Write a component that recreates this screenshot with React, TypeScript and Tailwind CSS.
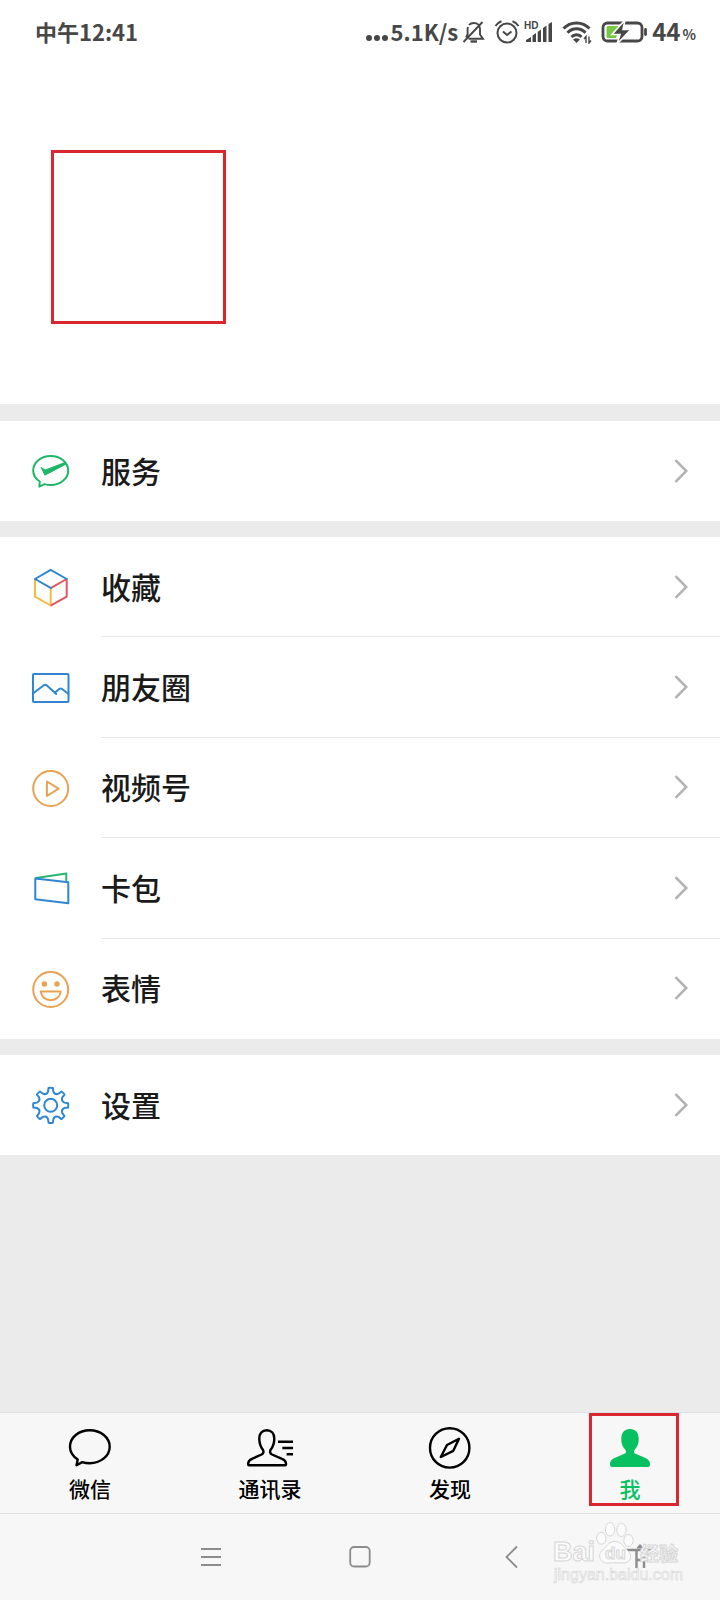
import type { ReactNode } from 'react';

const GREEN = '#1db767';
const BLUE = '#2f86d3';
const ORANGE = '#e8a252';

// Eight teeth around the centre (19.7, 20.3)
const gearPath = (() => {
  const at = (deg: number, r: number) => {
    const a = (deg * Math.PI) / 180;
    return `${(19.7 + r * Math.sin(a)).toFixed(2)} ${(20.3 - r * Math.cos(a)).toFixed(2)}`;
  };
  let d = '';
  for (let i = 0; i < 8; i++) {
    const c = i * 45;
    d += `${i === 0 ? 'M' : 'L'}${at(c - 7, 17.5)}`;
    d += `Q${at(c, 17.8)} ${at(c + 7, 17.5)}`;
    d += `L${at(c + 11, 14)}`;
    d += `Q${at(c + 22.5, 11)} ${at(c + 34, 14)}`;
  }
  return d + 'Z';
})();

interface IconProps {
  children: ReactNode;
  color?: string;
}

const RowIcon = ({ children, color }: IconProps) => (
  <svg
    viewBox="0 0 40 40"
    className="w-10 h-10 shrink-0"
    fill="none"
    stroke={color}
    strokeWidth="2"
    strokeLinejoin="round"
    strokeLinecap="round"
    aria-hidden="true"
  >
    {children}
  </svg>
);

const ServiceIcon = () => (
  <RowIcon color={GREEN}>
    <path d="M8.8 30.5C4.6 27.8 2.2 24 2.2 19.5C2.2 11.4 10 5 19.700 5S37.2 11.4 37.2 19.5S29.4 34 19.7 34C17.5 34 15.4 33.7 13.5 33.1L8.3 35.6Z" />
    <path d="M10 16L14.2 18.600L34 11L36 13L13.9 24.500Z" fill={GREEN} stroke="none" />
    <path d="M10.2 16.400L13.9 24L35.500 12.600" strokeWidth="1" />
  </RowIcon>
);

const FavoritesIcon = () => (
  <RowIcon>
    <path d="M4 12.5V29.7L19.7 38.5V21" stroke="#f3bd45" />
    <path d="M35.7 12V29.7L20.5 38.2M35.7 12L20.5 20.7" stroke="#df5661" />
    <path d="M4 12L19.7 2.800L35.7 12M4 12L19.7 20.900" stroke={BLUE} />
  </RowIcon>
);

const MomentsIcon = () => (
  <RowIcon color={BLUE}>
    <rect x="2" y="6" width="35.5" height="28" rx="1" />
    <path d="M2 25.5L12.8 17.2Q14.2 16.2 15.6 17.2L25.2 26M23.8 24.6L28.3 21Q29.7 20 31.1 21L37.5 26" />
  </RowIcon>
);

const ChannelsIcon = () => (
  <RowIcon color={ORANGE}>
    <circle cx="19.7" cy="20.5" r="17.5" />
    <path d="M15.9 13.5V28L27.7 20.700Z" />
  </RowIcon>
);

const CardsIcon = () => (
  <RowIcon>
    <path d="M5 10L35.3 5.6V13" stroke="#2bb574" />
    <path d="M4.3 10.5L37.3 14.2V35.3L4.3 31.200Z" stroke={BLUE} />
  </RowIcon>
);

const StickersIcon = () => (
  <RowIcon color={ORANGE}>
    <circle cx="19.7" cy="20.5" r="17.5" />
    <circle cx="13.4" cy="15" r="2.7" fill={ORANGE} stroke="none" />
    <circle cx="26" cy="15" r="2.7" fill={ORANGE} stroke="none" />
    <path d="M9.8 22.5H29.7C29.2 27.700 25.1 31.2 19.7 31.2S10.3 27.7 9.8 22.500Z" />
  </RowIcon>
);

const SettingsIcon = () => (
  <RowIcon color={BLUE}>
    <path d={gearPath} />
    <circle cx="19.7" cy="20.3" r="6.5" />
  </RowIcon>
);

interface RowItem {
  label: string;
  icon: ReactNode;
}

const groups: RowItem[][] = [
  [{ label: '服务', icon: <ServiceIcon /> }],
  [
    { label: '收藏', icon: <FavoritesIcon /> },
    { label: '朋友圈', icon: <MomentsIcon /> },
    { label: '视频号', icon: <ChannelsIcon /> },
    { label: '卡包', icon: <CardsIcon /> },
    { label: '表情', icon: <StickersIcon /> },
  ],
  [{ label: '设置', icon: <SettingsIcon /> }],
];

const MenuRow = ({ item, divided }: { item: RowItem; divided: boolean }) => (
  <button type="button" className="w-full min-h-[100px] pl-[31px] flex items-center gap-[30px] text-left">
    {item.icon}
    <span
      className={`flex-1 self-stretch pr-8 flex items-center justify-between border-b ${
        divided ? 'border-[#e9e9e9]' : 'border-transparent'
      }`}
    >
      <span className="pb-0.5 text-[30px] leading-10 font-medium text-[#1a1a1a]">{item.label}</span>
      <svg viewBox="0 0 14 24" className="w-[14px] h-6" fill="none" stroke="#b2b2b2" strokeWidth="2.5" aria-hidden="true">
        <path d="M1.5 1.2L12.3 12L1.5 22.8" />
      </svg>
    </span>
  </button>
);

const StatusBar = () => (
  <div className="h-16 pl-[35px] pr-6 flex items-center justify-between text-[#474747] font-bold">
    <span className="pb-0.5 text-[22px] leading-8">中午12:41</span>
    <div className="flex items-center">
      <svg viewBox="0 0 26 32" className="w-[26px] h-8" fill="currentColor" aria-hidden="true">
        <circle cx="4" cy="22" r="3" />
        <circle cx="12" cy="22" r="3" />
        <circle cx="20" cy="22" r="3" />
      </svg>
      <span className="pb-0.5 text-[22px] leading-8">5.1K/s</span>
      {/* Muted bell */}
      <svg viewBox="0 0 24 24" className="ml-1 w-6 h-6" fill="none" stroke="currentColor" strokeWidth="1.9" aria-hidden="true">
        <path d="M7 5C8.2 3.6 9.8 3 11.8 3C15.600 3 18 5.600 18 9V14.500L21 18.800H6.500M4 17.500L5.600 14.500V9Q5.600 8 6 7M1.500 22L20.500 2" />
        <path d="M8.500 21.500H15" strokeWidth="2.4" />
      </svg>
      {/* Alarm */}
      <svg viewBox="0 0 26 26" className="ml-2 w-[26px] h-[26px]" fill="none" stroke="currentColor" strokeWidth="2" aria-hidden="true">
        <circle cx="13" cy="14" r="9.5" />
        <path d="M1.500 7Q3.500 3.500 7.500 2.200M24.500 7Q22.500 3.500 18.500 2.200M9 12.500L13 16L17.500 12.500" />
      </svg>
      {/* Signal */}
      <svg viewBox="0 0 30 24" className="ml-1 w-[30px] h-6" fill="currentColor" aria-hidden="true">
        <text x="0" y="9" fontSize="10" fontFamily="Liberation Sans, sans-serif">HD</text>
        <path d="M2 22V20L7 17V22ZM8.500 22V15.500L12 13V22ZM13.700 22V12L17 9.500V22ZM19 22V8L22.500 5.500V22ZM24.500 22V4L28 2V22Z" />
      </svg>
      {/* Wifi */}
      <svg viewBox="0 0 30 24" className="ml-2 w-[30px] h-6" fill="none" stroke="currentColor" strokeWidth="3" aria-hidden="true">
        <path d="M1.500 8.500C8.500 1 20.500 1 27.500 8.500M5.500 12.800C10.500 7.500 18.500 7.500 23.500 12.800M9.500 17C12 14 17 14 19.500 17" />
        <path d="M11 19.500Q14.500 17 18 19.500L14.500 23Z" fill="currentColor" stroke="none" />
        <path d="M24 23V16.500L22 19M27 16.500V23L29 20.500" strokeWidth="1.4" />
      </svg>
      {/* Charging battery */}
      <svg viewBox="0 0 48 24" className="ml-2 w-12 h-6" fill="none" aria-hidden="true">
        <rect x="3" y="3" width="39" height="18" rx="4.5" stroke="currentColor" strokeWidth="2.8" />
        <path d="M8 6H20L16 18H8Q6.500 18 6.500 16.500V7.500Q6.500 6 8 6Z" fill="#76c943" />
        <path d="M25 0L12 14.500H20L17 24L31 9.500H23Z" fill="currentColor" stroke="#fff" strokeWidth="1.6" />
        <path d="M45.500 9.500V14.500" stroke="currentColor" strokeWidth="2.8" strokeLinecap="round" />
      </svg>
      <span className="ml-1 pb-0.5 text-[24px] leading-8">44</span>
      <span className="ml-0.5 mt-1 text-[14px] leading-5">%</span>
    </div>
  </div>
);

const TabIcon = ({ children }: { children: ReactNode }) => (
  <svg
    viewBox="0 0 48 48"
    className="w-12 h-12"
    fill="none"
    stroke="currentColor"
    strokeWidth="2.4"
    strokeLinejoin="round"
    aria-hidden="true"
  >
    {children}
  </svg>
);

const tabs = [
  {
    label: '微信',
    active: false,
    icon: (
      <TabIcon>
        <path d="M11.7 35.5C6.8 32.2 4 27.7 4 22.7C4 13.5 12.7 6.2 23.7 6.2S43.7 13.5 43.7 22.7S34.7 39.2 23.7 39.2C21.1 39.2 18.5 38.9 16.3 38.1L10.5 41.2Z" />
      </TabIcon>
    ),
  },
  {
    label: '通讯录',
    active: false,
    icon: (
      <TabIcon>
        <path d="M20.7 6.2C25.5 6.2 28.3 9.6 28.3 14.5C28.3 20 27.5 22 24.8 25.5C23.5 27.5 24 29.5 26 30.5L36 34.8C39 36 40 37.5 40 39.5V40.5Q40 41.3 39.2 41.3H3Q2.2 41.3 2.2 40.5V39.5C2.2 37.5 3.2 36 6 34.8L15.6 30.5C17.6 29.5 18 27.5 16.7 25.5C14 22 13.3 20 13.3 14.5C13.3 9.6 16 6.2 20.7 6.2Z" />
        <path d="M32 17.7H47M36.3 24H47M40.6 30.3H47" />
      </TabIcon>
    ),
  },
  {
    label: '发现',
    active: false,
    icon: (
      <TabIcon>
        <circle cx="23.7" cy="23.9" r="19.7" />
        <path d="M33 14.8L21 21L14.8 33L27.3 26.8Z" />
      </TabIcon>
    ),
  },
  {
    label: '我',
    active: true,
    icon: (
      <TabIcon>
        <path
          d="M24 5C29.5 5 32.7 8.8 32.7 14.5C32.7 20 31.5 22.5 28.5 26C27.5 28 28 29 29.5 29.8L39.5 34C43 35.5 44 37.5 44 40Q44 43 42 43H6Q4 43 4 40C4 37.5 5 35.5 8.5 34L18.5 29.8C20 29 20.5 28 19.5 26C16.5 22.5 15.3 20 15.3 14.5C15.3 8.8 18.5 5 24 5Z"
          fill="currentColor"
          stroke="none"
        />
      </TabIcon>
    ),
  },
];

const TabBar = () => (
  <nav className="grid grid-cols-4 h-[102px] border-y border-[#e0e0e0] bg-[#f7f7f7]">
    {tabs.map(tab => (
      <button
        key={tab.label}
        type="button"
        className={`relative flex flex-col items-center pt-[11px] ${tab.active ? 'text-[#07c160]' : 'text-black'}`}
      >
        {tab.icon}
        <span className="mt-0.5 text-[21px] leading-7 font-medium">{tab.label}</span>
        {tab.active && <span className="absolute left-[49px] top-0 w-[90px] h-[93px] border-[3px] border-[#d9262f]" />}
      </button>
    ))}
  </nav>
);

const Watermark = () => (
  <svg
    viewBox="0 0 136 66"
    className="absolute right-[31px] top-[6px] w-[136px] h-[66px] pointer-events-none"
    fill="#fbfbfb"
    stroke="#d6d6d6"
    aria-hidden="true"
  >
    <ellipse cx="48.3" cy="18.3" rx="4.7" ry="6" />
    <ellipse cx="57" cy="9.3" rx="4.7" ry="6.7" />
    <ellipse cx="68.5" cy="10" rx="4.7" ry="6.5" />
    <ellipse cx="75.5" cy="20.5" rx="4.7" ry="6" />
    <path d="M62 21.500C67 21.500 69 25 73 29C80 34 79 43 70 43C65 43 61 42.500 56 43C46 44 44 34 50 29.500C55 25 56 21.500 62 21.500Z" />
    <g fontFamily="Liberation Sans, Noto Sans CJK SC, sans-serif" fontWeight="700">
      <text x="0" y="41" fontSize="27">Bai</text>
      <text x="52" y="39" fontSize="17">du</text>
      <text x="87" y="41" fontSize="19">经验</text>
      <text x="1" y="60" fontSize="16" strokeWidth="0.6" fontWeight="400">jingyan.baidu.com</text>
    </g>
  </svg>
);

const SystemNav = () => (
  <nav className="relative h-[86px] pl-[136px] pr-[26px] grid grid-cols-[150fr_150fr_150fr_108fr] bg-[#f7f7f7] text-[#8c8c8c]">
    <button type="button" aria-label="菜单" className="flex items-center justify-center">
      <svg viewBox="0 0 24 24" className="w-6 h-6" fill="none" stroke="currentColor" strokeWidth="1.8">
        <path d="M2 4H22M2 12H22M2 20H22" />
      </svg>
    </button>
    <button type="button" aria-label="主页" className="flex items-center justify-center">
      <svg viewBox="0 0 24 24" className="w-6 h-6" fill="none" stroke="currentColor" strokeWidth="1.8">
        <rect x="1.2" y="2" width="19.5" height="19.5" rx="4" />
      </svg>
    </button>
    <button type="button" aria-label="返回" className="flex items-center justify-center">
      <svg viewBox="0 0 24 24" className="w-6 h-6" fill="none" stroke="currentColor" strokeWidth="1.8">
        <path d="M18 1.500L7.500 12L18 22.500" />
      </svg>
    </button>
    <button type="button" aria-label="无障碍" className="flex items-center justify-center">
      <svg viewBox="0 0 28 28" className="w-7 h-7" fill="none" stroke="currentColor" strokeWidth="2.4">
        <path d="M1 7H27M10.500 7V25M18 7V25M10 17H18.500" />
        <path d="M11 5L14 1.500L17 5Z" fill="currentColor" strokeWidth="1" />
      </svg>
    </button>
    <Watermark />
  </nav>
);

export default function App() {
  return (
    <div className="min-h-screen flex flex-col bg-[#ebebeb] font-['Noto_Sans_CJK_SC',sans-serif]">
      <header className="bg-white pb-20">
        <StatusBar />
        {/* Profile area */}
        <div className="pt-[86px] pl-[51px]">
          <div className="w-[175px] h-[174px] border-[3px] border-[#d9262f]" />
        </div>
      </header>

      <main className="flex-1 pt-[17px] flex flex-col gap-4">
        {groups.map(group => (
          <section
            key={group[0].label}
            className={`grid auto-rows-fr bg-white ${group.length > 1 ? 'min-h-[502px]' : ''}`}
          >
            {group.map((item, i) => (
              <MenuRow key={item.label} item={item} divided={i < group.length - 1} />
            ))}
          </section>
        ))}
      </main>

      <TabBar />
      <SystemNav />
    </div>
  );
}
